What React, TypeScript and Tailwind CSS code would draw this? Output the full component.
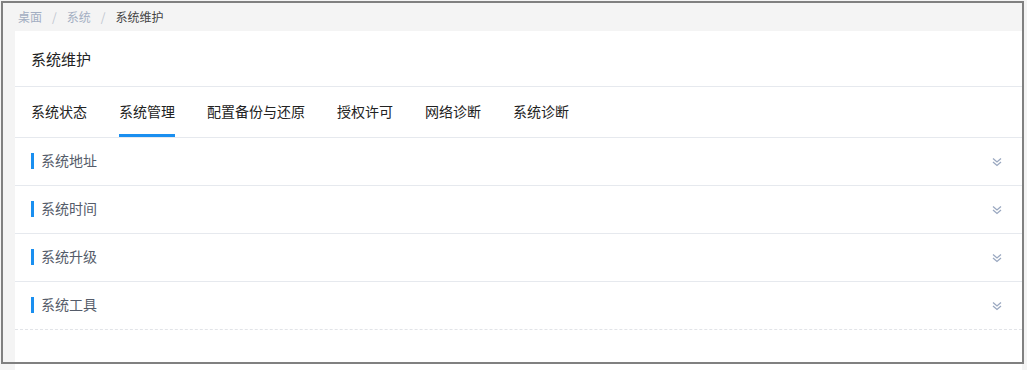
import React from 'react';

const tabs = ['系统状态', '系统管理', '配置备份与还原', '授权许可', '网络诊断', '系统诊断'];
const sections = ['系统地址', '系统时间', '系统升级', '系统工具'];

function DoubleDown() {
  return (
    <svg width="10" height="10" viewBox="0 0 10 10" fill="none" stroke="#9aa8c0" strokeWidth="1.3">
      <polyline points="1,1.5 5,5 9,1.5" />
      <polyline points="1,5 5,8.5 9,5" />
    </svg>
  );
}

export default function App() {
  const font = { fontFamily: '"Noto Sans CJK SC", "Noto Sans", sans-serif' };
  return (
    <div className="relative w-[1027px] h-[370px] overflow-hidden bg-[#f4f4f4]" style={font}>
      <div className="flex items-center h-[31px] pl-[18px] pt-[3px] text-[12px]">
        <span className="text-[#a3aec2]">桌面</span>
        <span className="px-[10px] text-[#c0c6d0]">/</span>
        <span className="text-[#a3aec2]">系统</span>
        <span className="px-[10px] text-[#c0c6d0]">/</span>
        <span className="text-[#444]">系统维护</span>
      </div>

      <div className="ml-[15px] w-[1007px] h-[339px] bg-white">
        <div className="h-[56px] flex items-center pl-[16px] pt-[2px] text-[15px] text-[#222] border-b border-[#e6e9ee]">
          系统维护
        </div>
        <div className="h-[51px] flex items-stretch gap-[32px] pl-[16px] border-b border-[#e6e9ee] text-[14px] text-[#222]">
          {tabs.map((t, i) => (
            <div
              key={t}
              className={`flex items-center pt-[2px] border-b-[3px] ${i === 1 ? 'border-[#1a8ff0]' : 'border-transparent'}`}
            >
              {t}
            </div>
          ))}
        </div>
        {sections.map((s, i) => (
          <div
            key={s}
            className={`h-[48px] flex items-center justify-between pl-[16px] pr-[20px] border-b ${
              i === sections.length - 1 ? 'border-dashed border-[#e2e4e8]' : 'border-[#e6e9ee]'
            }`}
          >
            <div className="flex items-center gap-[7px] pb-[2px]">
              <span className="w-[3px] h-[16px] bg-[#1a8ff0]" />
              <span className="text-[14px] text-[#555c6a]">{s}</span>
            </div>
            <DoubleDown />
          </div>
        ))}
      </div>

      <div className="absolute left-[1px] top-[1px] w-[1023px] h-[363px] border-2 border-[#808080] pointer-events-none" />
    </div>
  );
}
